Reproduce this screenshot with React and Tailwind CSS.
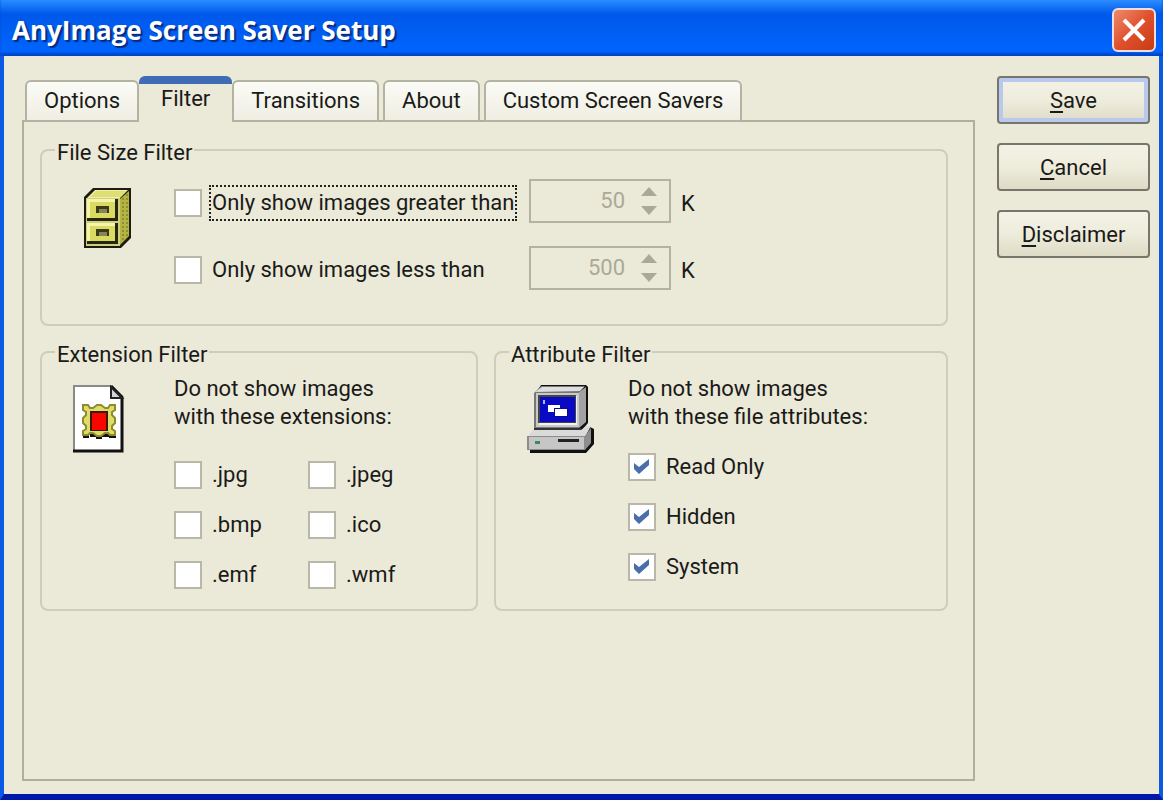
import { useState } from 'react';

const tabs = ['Options', 'Filter', 'Transitions', 'About', 'Custom Screen Savers'];

const CabinetIcon = () => (
    <svg width="68" height="68" viewBox="0 0 68 68" aria-hidden="true">
        <path d="M12 12 L21 3 H59 V53 L49 63 H12 Z" fill="#1c1c10" />
        <path d="M15 13 L23 5 H56 L48 13 Z" fill="#f0f0a4" />
        <path d="M18 12 L24 6 H54 L48 12 Z" fill="#dede74" />
        <path d="M48 14 L57 6 V51 L48 60 Z" fill="#b4b442" />
        <path d="M51 13 V57 M55 9 V53" stroke="#8f8f30" strokeWidth="2" strokeDasharray="2 2" />
        <path d="M14 13 H48 V61 H14 Z" fill="#cfcf80" />
        <path d="M15 14 H46 V36 H15 Z M15 38 H46 V59 H15 Z" fill="#26260e" />
        <path d="M15 14 H43 V33 H15 Z M15 38 H43 V56 H15 Z" fill="#f4f4aa" />
        <path d="M18 17 H43 V33 H18 Z M18 41 H43 V56 H18 Z" fill="#dada62" />
        <path d="M24 21 H37 V28 H24 Z M24 44 H37 V51 H24 Z" fill="#3a3a18" />
        <path d="M27 24 H35 V28 H27 Z M27 47 H35 V51 H27 Z" fill="#85855a" />
    </svg>
);

const PictureFileIcon = () => (
    <svg width="68" height="68" viewBox="0 0 68 68" aria-hidden="true">
        <path d="M2 1 H39 L51 13 V66 H2 Z" fill="#fff" />
        <path d="M2 66 V1 H39" fill="none" stroke="#8a8a8a" strokeWidth="2" />
        <path d="M39 1 L50 12 V66 H1" fill="none" stroke="#111" strokeWidth="3" />
        <path d="M39 2 V13 H50 Z" fill="#d4d4d4" stroke="#222" strokeWidth="2" />
        <path d="M11 49 h6 v4 h-6 z M18 48 h7 v4 h-7 z M24 50 h6 v4 h-6 z M30 48 h7 v4 h-7 z M37 49 h7 v4 h-7 z" fill="#111" />
        <path
            d="M11 20 H16 L18 23 H21 L25 20 H29 L33 23 H36 L38 20 H43 V25 L40 27 V30 L43 33 V38 L40 41 V44 L43 46 V50 H38 L36 48 H33 L29 51 H25 L21 48 H18 L16 50 H11 V46 L14 44 V41 L11 38 V33 L14 30 V27 L11 25 Z"
            fill="#e0dc68"
            stroke="#8f8b2e"
            strokeWidth="2"
        />
        <path d="M18 26 H36 V46 H18 Z" fill="#3a1a08" />
        <path d="M20 28 H34 V45 H20 Z" fill="#fb0500" />
    </svg>
);

const ComputerIcon = () => (
    <svg width="68" height="68" viewBox="0 0 68 68" aria-hidden="true">
        <path d="M15 0 H60 L62 2 V38 L56 45 H10 V8 Z" fill="#111" />
        <path d="M8 8 L15 1 H59 L53 7 V43 H8 Z" fill="#777" />
        <path d="M9 7 L16 2 H58 L54 6 Z" fill="#dedede" />
        <path d="M10 8 H53 V42 H10 Z" fill="#c9c9c9" />
        <path d="M53 7 L60 2 V37 L53 43 Z" fill="#a2a2a2" />
        <path d="M13 11 H51 V40 H13 Z" fill="#f2f2f2" />
        <path d="M12 10 H50 V38 H12 Z" fill="#444" />
        <path d="M14 12 H49 V37 H14 Z" fill="#0a0ac4" />
        <path d="M17 15 h2 v4 h-2 z" fill="#9cc0ff" />
        <path d="M22 20 h12 v7 h-12 z" fill="#fff" />
        <path d="M28 23 h14 v9 h-14 z" fill="#0a0a90" />
        <path d="M29 24 h12 v7 h-12 z" fill="#fff" />
        <path d="M4 50 L10 44 H56 L62 41 L68 44 V59 L60 68 H4 Z" fill="#111" />
        <path d="M1 52 L7 45 H55 L60 41 H65 L59 52 Z" fill="#dadada" />
        <path d="M8 44 H55" stroke="#333" strokeWidth="2" />
        <path d="M1 51 H59 V65 H1 Z" fill="#8c8c8c" />
        <path d="M3 52 H58 V64 H3 Z" fill="#c6c6c6" />
        <path d="M59 51 L65 43 V58 L59 65 Z" fill="#8e8e8e" />
        <path d="M32 54 h21 v3 h-21 z" fill="#222" />
        <path d="M9 56 h5 v3 h-5 z" fill="#3d8a62" />
    </svg>
);

const Checkbox = ({ id, label, defaultChecked = false, focused = false }) => {
    const [checked, setChecked] = useState(defaultChecked);

    return (
        <div className="flex items-center gap-[9px]">
            <span className="relative flex">
                <input
                    id={id}
                    type="checkbox"
                    checked={checked}
                    onChange={(e) => setChecked(e.target.checked)}
                    className="size-7 appearance-none border-2 border-[#b9b8a8] bg-white"
                />
                {checked && (
                    <svg className="pointer-events-none absolute inset-0" width="28" height="28" viewBox="0 0 28 28" aria-hidden="true">
                        <path d="M6 10 L11 14 L21 6 V12 L11 21 L6 16 Z" fill="#4a6ea8" />
                    </svg>
                )}
            </span>
            <label
                htmlFor={id}
                className={`whitespace-nowrap px-px py-0.5 ${
                    focused ? 'outline-2 outline-dotted outline-[#222]' : ''
                }`}
            >
                {label}
            </label>
        </div>
    );
};

const SizeInput = ({ label, value }) => (
    <div className="flex h-11 w-[142px] items-center border-2 border-[#b4b3a1] pr-2">
        <input
            type="text"
            aria-label={label}
            defaultValue={value}
            disabled
            className="w-full min-w-0 flex-1 bg-transparent pr-3 text-right text-[#aaa998]"
        />
        <div className="flex flex-col gap-2">
            <button type="button" disabled aria-label="Increase" className="flex w-6 justify-center">
                <svg width="18" height="10" viewBox="0 0 18 10"><path d="M9 0 L17 9 H1 Z" fill="#aaa998" /></svg>
            </button>
            <button type="button" disabled aria-label="Decrease" className="flex w-6 justify-center">
                <svg width="18" height="10" viewBox="0 0 18 10"><path d="M1 1 H17 L9 10 Z" fill="#aaa998" /></svg>
            </button>
        </div>
    </div>
);

const SizeRow = ({ id, label, inputLabel, value, focused }) => (
    <div className="grid grid-cols-[355px_142px_auto] items-center">
        <div className="pt-1">
            <Checkbox id={id} label={label} focused={focused} />
        </div>
        <SizeInput label={inputLabel} value={value} />
        <span className="pt-1.5 pl-2.5">K</span>
    </div>
);

const Group = ({ title, children }) => (
    <fieldset className="min-w-0 rounded-lg border-2 border-[#cfcdba]">
        <legend className="ml-[13px] px-0.5 pt-1.5 leading-6">{title}</legend>
        {children}
    </fieldset>
);

const ActionButton = ({ label, primary }) => (
    <button
        type="button"
        className={`h-12 w-full rounded-sm border-2 border-[#77766a] bg-linear-to-b from-[#f3f2e6] via-[#eeecdc] to-[#dedbc6] pt-0.5 ${
            primary ? 'shadow-[inset_0_0_0_4px_#b9c9ee]' : ''
        }`}
    >
        <span className="underline decoration-2 underline-offset-3">{label[0]}</span>{label.slice(1)}
    </button>
);

const App = () => {
    const [activeTab, setActiveTab] = useState('Filter');

    return (
        <div className="flex min-h-screen flex-col border-x-4 border-b-[6px] border-x-[#0a5ae6] border-b-[#0019a8] bg-[#ebe9d8] font-['Roboto','Liberation_Sans',sans-serif] text-[22px] leading-7 text-[#1a1a18]">
            {/* Title bar */}
            <header className="-mx-1 flex h-14 items-center justify-between bg-linear-to-b from-[#2a8cff] via-[#0058ea] via-25% to-[#0066ff] pt-1 pr-[7px] pl-3 shadow-[inset_0_-3px_2px_#0046c8]">
                <h1 className="font-['Open_Sans','Liberation_Sans',sans-serif] text-[26px] font-bold text-white [text-shadow:2px_2px_1px_#0a2a80]">
                    AnyImage Screen Saver Setup
                </h1>
                <button
                    type="button"
                    aria-label="Close"
                    className="flex size-11 items-center justify-center rounded-md border-2 border-[#f3dcdc] bg-linear-to-br from-[#ec8a6c] via-[#e0502c] to-[#c63c12]"
                >
                    <svg width="28" height="28" viewBox="0 0 28 28" aria-hidden="true">
                        <path d="M4 4 L24 24 M24 4 L4 24" stroke="#fff" strokeWidth="4" />
                    </svg>
                </button>
            </header>

            <div className="flex flex-1 gap-[22px] pt-5 pr-[9px] pb-[13px] pl-[18px]">
                <main className="flex min-w-0 flex-1 flex-col">
                    {/* Tabs */}
                    <div role="tablist" className="z-10 -mb-0.5 flex items-end pl-[3px]">
                        {tabs.map((tab) => (
                            <button
                                key={tab}
                                type="button"
                                role="tab"
                                aria-selected={tab === activeTab}
                                onClick={() => setActiveTab(tab)}
                                className={
                                    tab === activeTab
                                        ? 'h-[46px] rounded-t-md border-t-8 border-t-[#3f6db5] bg-[#ebe9d8] px-[22px] pb-2'
                                        : 'mr-1 h-[42px] rounded-t-md border-2 border-[#b4b3a1] bg-linear-to-b from-[#fbfbf7] to-[#efeee2] px-[17px] first:mr-0'
                                }
                            >
                                {tab}
                            </button>
                        ))}
                    </div>

                    <section role="tabpanel" aria-label={activeTab} className="flex-1 border-2 border-[#b0ae9c] pt-[13px] pr-[25px] pb-4 pl-4">
                        <Group title="File Size Filter">
                            <div className="flex gap-[34px] pt-3.5 pb-[34px] pl-[30px]">
                                <div className="pt-1.5"><CabinetIcon /></div>
                                <div className="flex flex-col gap-[23px]">
                                    <SizeRow id="greater" label="Only show images greater than" inputLabel="Minimum size" value="50" focused />
                                    <SizeRow id="less" label="Only show images less than" inputLabel="Maximum size" value="500" />
                                </div>
                            </div>
                        </Group>

                        <div className="mt-[11px] grid grid-cols-[438fr_454fr] gap-4">
                            <Group title="Extension Filter">
                                <div className="flex gap-[34px] pt-2 pb-[18px] pl-[30px]">
                                    <div className="pt-2.5"><PictureFileIcon /></div>
                                    <div>
                                        <p>Do not show images<br />with these extensions:</p>
                                        <div className="mt-7 grid grid-cols-[134px_auto] gap-y-[18px]">
                                            <Checkbox id="jpg" label=".jpg" />
                                            <Checkbox id="jpeg" label=".jpeg" />
                                            <Checkbox id="bmp" label=".bmp" />
                                            <Checkbox id="ico" label=".ico" />
                                            <Checkbox id="emf" label=".emf" />
                                            <Checkbox id="wmf" label=".wmf" />
                                        </div>
                                    </div>
                                </div>
                            </Group>

                            <Group title="Attribute Filter">
                                <div className="flex gap-[34px] pt-2 pb-[18px] pl-[30px]">
                                    <div className="pt-2.5"><ComputerIcon /></div>
                                    <div>
                                        <p>Do not show images<br />with these file attributes:</p>
                                        <div className="mt-5 grid gap-y-[18px]">
                                            <Checkbox id="readonly" label="Read Only" defaultChecked />
                                            <Checkbox id="hidden" label="Hidden" defaultChecked />
                                            <Checkbox id="system" label="System" defaultChecked />
                                        </div>
                                    </div>
                                </div>
                            </Group>
                        </div>
                    </section>
                </main>

                <aside className="flex w-[153px] flex-col gap-[19px]">
                    <ActionButton label="Save" primary />
                    <ActionButton label="Cancel" />
                    <ActionButton label="Disclaimer" />
                </aside>
            </div>
        </div>
    );
};

export default App;
